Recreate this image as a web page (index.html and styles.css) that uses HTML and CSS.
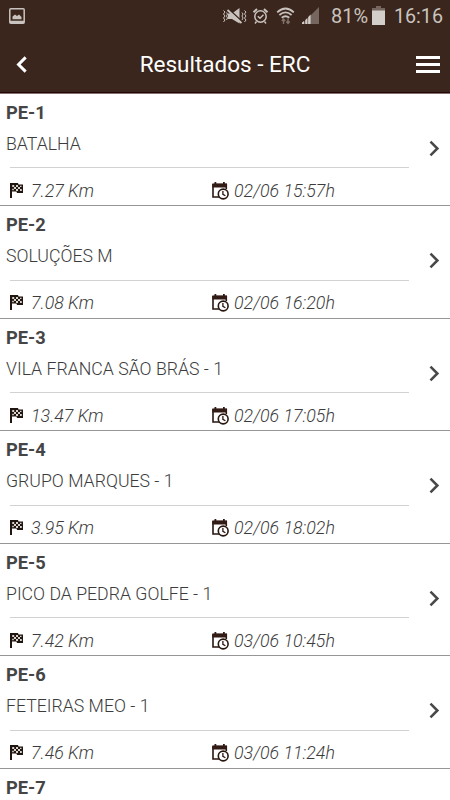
FILE: index.html
```html
<!DOCTYPE html>
<html lang="pt">
<head>
<meta charset="utf-8">
<meta name="viewport" content="width=device-width, initial-scale=1">
<title>Resultados - ERC</title>
<link rel="stylesheet" href="styles.css">
</head>
<body>
<svg class="sprite" aria-hidden="true">
  <symbol id="flag" viewBox="0 0 13 16">
    <path d="M0 0H8L8.5 1.5H13V10H7L6.5 8.5H2V15H0Z" fill="#211510"/>
    <path d="M2.2 2h2v2h-2zM6 2h2v2H6zM4 4h2v2H4zM8 4h2v2H8zM2.2 5.8h1.6v1.5H2.2zM6 6h2v2H6zM10 6h1.8v2H10zM10 2.8h1.5V4H10z" fill="#d8d4d0"/>
  </symbol>
  <symbol id="calendar" viewBox="0 0 17 18">
    <path d="M1.7 2.5H14.3V7M1 2V15H7" fill="none" stroke="#28160f" stroke-width="1.6"/>
    <path d="M.3 1.6H15V5.5H.3ZM2.5 0H4.3V3H2.5ZM11 0H12.8V3H11Z" fill="#321b14"/>
    <circle cx="11.2" cy="12" r="4.9" fill="#fff" stroke="#28160f" stroke-width="1.6"/>
    <path d="M10.9 9V12.3L13.4 13.8" fill="none" stroke="#28160f" stroke-width="1.3"/>
  </symbol>
  <symbol id="chevron" viewBox="0 0 10 16">
    <path d="M1.2 1.5 7.7 8 1.2 14.5" fill="none" stroke="#484848" stroke-width="2.4"/>
  </symbol>
</svg>
<header class="header">
  <div class="status">
    <svg class="picture" viewBox="0 0 16 16"><rect x=".8" y=".8" width="14.4" height="14.4" rx="1" fill="none" stroke="#c9c3bf" stroke-width="1.5"/><path d="M1 12.8H15V15H1ZM3.5 11.3V8.5L6 6.5 8 8 10 6.5 12.5 9V11.3Z" fill="#c9c3bf"/></svg>
    <svg class="signals" viewBox="0 0 100 20">
      <g fill="none" stroke="#c9c3bf">
        <path d="M1.5 3.5 3 5 1.5 7 3 9 1.5 11 3 13 1.5 15M4.5 5.5 5.5 7 4.5 9 5.5 11 4.5 13M20 5.5 21 7 20 9 21 11 20 13M22.5 3.5 24 5 22.5 7 24 9 22.5 11 24 13 22.5 15" stroke-width="1"/>
        <circle cx="38.5" cy="9.5" r="5.7" stroke-width="1.5"/>
        <path d="M35.8 9.2 38 11.3 41.5 7.7M34.5 14.5 33 16.5M42.5 14.5 44 16.5" stroke-width="1.4"/>
        <path d="M31.5 5.2 35 2M42 2 45.5 5.2" stroke-width="2"/>
        <path d="M55.2 5.3Q63.5-2.3 71.8 5.3M57.4 8Q63.5 2.8 69.6 8M59.7 10.7Q63.5 7.8 67.3 10.7" stroke-width="1.8"/>
      </g>
      <path d="M6 6.5H10L17.5 1V16.5L10 12H6Z" fill="#c9c3bf"/>
      <path d="M6.5 1.8 20 14.5" stroke="#3a261c" stroke-width="1.6"/>
      <path d="M5.5 3 19.5 16" stroke="#c9c3bf" stroke-width="1.8"/>
      <path d="M61.5 17V12M59.8 14 61.5 12 63.2 14M66 11.5V16.5M64.3 14.5 66 16.5 67.7 14.5" fill="none" stroke="#81736b" stroke-width="1.4"/>
      <path d="M80 17 97 0V17Z" fill="#75675f"/>
      <path d="M80 17V15.5L82 14V17ZM83.3 17V13L85.3 11V17ZM86.2 17V10L88.6 7.5V17Z" fill="#d3ceca"/>
    </svg>
    <span class="percent">81%</span>
    <svg class="battery" viewBox="0 0 13 19"><path d="M4 0H9V2H13V6H0V2H4Z" fill="#75675f"/><path d="M0 4.5H13V19H0Z" fill="#d3ceca"/></svg>
    <span class="time">16:16</span>
  </div>
  <div class="toolbar">
    <svg class="back" viewBox="0 0 10 16"><path d="M8.9 1.3 2.2 8 8.9 14.7" fill="none" stroke="#fff" stroke-width="2.8"/></svg>
    <h1 class="title">Resultados - ERC</h1>
    <div class="menu"><i></i><i></i><i></i></div>
  </div>
</header>
<main class="list">
  <section class="stage"><h2>PE-1</h2><p class="name">BATALHA</p><svg class="chevron"><use href="#chevron"/></svg>
    <div class="details"><svg class="flag"><use href="#flag"/></svg><span class="km">7.27 Km</span><svg class="calendar"><use href="#calendar"/></svg><span>02/06 15:57h</span></div></section>
  <section class="stage"><h2>PE-2</h2><p class="name">SOLUÇÕES M</p><svg class="chevron"><use href="#chevron"/></svg>
    <div class="details"><svg class="flag"><use href="#flag"/></svg><span class="km">7.08 Km</span><svg class="calendar"><use href="#calendar"/></svg><span>02/06 16:20h</span></div></section>
  <section class="stage"><h2>PE-3</h2><p class="name">VILA FRANCA SÃO BRÁS - 1</p><svg class="chevron"><use href="#chevron"/></svg>
    <div class="details"><svg class="flag"><use href="#flag"/></svg><span class="km">13.47 Km</span><svg class="calendar"><use href="#calendar"/></svg><span>02/06 17:05h</span></div></section>
  <section class="stage"><h2>PE-4</h2><p class="name">GRUPO MARQUES - 1</p><svg class="chevron"><use href="#chevron"/></svg>
    <div class="details"><svg class="flag"><use href="#flag"/></svg><span class="km">3.95 Km</span><svg class="calendar"><use href="#calendar"/></svg><span>02/06 18:02h</span></div></section>
  <section class="stage"><h2>PE-5</h2><p class="name">PICO DA PEDRA GOLFE - 1</p><svg class="chevron"><use href="#chevron"/></svg>
    <div class="details"><svg class="flag"><use href="#flag"/></svg><span class="km">7.42 Km</span><svg class="calendar"><use href="#calendar"/></svg><span>03/06 10:45h</span></div></section>
  <section class="stage"><h2>PE-6</h2><p class="name">FETEIRAS MEO - 1</p><svg class="chevron"><use href="#chevron"/></svg>
    <div class="details"><svg class="flag"><use href="#flag"/></svg><span class="km">7.46 Km</span><svg class="calendar"><use href="#calendar"/></svg><span>03/06 11:24h</span></div></section>
  <section class="stage last"><h2>PE-7</h2></section>
</main>
</body>
</html>
```

FILE: styles.css
```css
* { box-sizing: border-box; }
body {
  margin: 0;
  height: 800px;
  display: flex;
  flex-direction: column;
  overflow: hidden;
  background: #fff;
  color: #3c3c3c;
  font-family: Roboto, sans-serif;
}
h1, h2, p { margin: 0; }
svg { display: block; flex: none; }
.sprite { position: absolute; width: 0; height: 0; }
.header {
  flex: none;
  height: 94px;
  background: #3a261c;
  border-bottom: 1px solid #85716b;
  box-shadow: inset 0 -1px #240606;
}
.status {
  display: flex;
  height: 34px;
  padding: 7px 7px 0 9px;
  color: #c9c3bf;
  font-size: 20px;
  line-height: 18px;
}
.picture { width: 16px; height: 16px; margin-top: 1px; }
.signals { width: 100px; height: 20px; margin-left: 197px; }
.percent { width: 42px; margin-left: 9px; white-space: nowrap; }
.battery { width: 13px; height: 19px; margin-top: -1px; }
.time { margin-left: 9px; font-size: 19.7px; line-height: 20px; }
.toolbar { display: flex; align-items: center; height: 60px; padding: 0 10px 0 16px; }
.back { width: 11px; height: 17px; margin-top: 1px; }
.title {
  flex: 1;
  padding: 0 0 0 7px;
  text-align: center;
  color: #fff;
  font-size: 22.5px;
  font-weight: 400;
  line-height: 30px;
}
.menu { display: flex; flex-direction: column; gap: 4px; width: 24px; margin-top: 1px; }
.menu i { height: 3px; background: #fff; }
.list { flex: 1; min-height: 0; margin-top: -0.1px; overflow: hidden; }
.stage {
  display: grid;
  grid-template: 37px 37.5px 1fr / 409px 1fr;
  height: 112.5px;
  border-bottom: 1px solid #969696;
}
.stage.last { height: 32px; border: 0; grid-template-rows: 32px; }
.stage h2 {
  grid-column: 1 / 3;
  padding: 7px 6px 0;
  color: #454545;
  font-size: 18.3px;
  font-weight: 700;
  line-height: 24px;
}
.name {
  margin-left: 10px;
  border-bottom: 1px solid #d2d2d2;
  text-indent: -4px;
  font-size: 17.7px;
  font-weight: 300;
  line-height: 27px;
  white-space: nowrap;
}
.chevron { width: 11px; height: 17px; margin: 9px 0 0 20px; }
.details {
  grid-column: 1 / 3;
  display: flex;
  align-items: center;
  padding: 8px 0 0 10px;
  font-size: 17.8px;
  font-style: italic;
  font-weight: 300;
  line-height: 24px;
}
.flag { width: 13px; height: 16px; margin-right: 8px; }
.km { width: 181px; }
.calendar { width: 17px; height: 18px; margin-right: 5px; }
```
